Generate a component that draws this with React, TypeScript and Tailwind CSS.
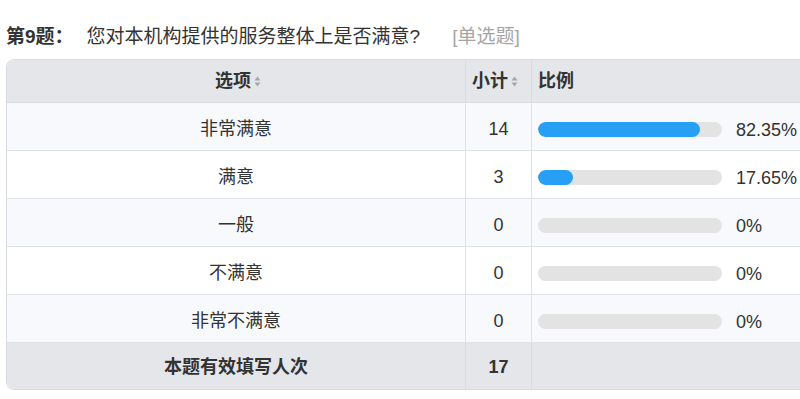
import React from "react";

const rows = [
  { label: "非常满意", count: "14", fill: 162, pct: "82.35%" },
  { label: "满意", count: "3", fill: 35, pct: "17.65%" },
  { label: "一般", count: "0", fill: 0, pct: "0%" },
  { label: "不满意", count: "0", fill: 0, pct: "0%" },
  { label: "非常不满意", count: "0", fill: 0, pct: "0%" },
];

function SortIcon() {
  return (
    <svg width="7" height="11" viewBox="0 0 7 11" className="ml-[3px]">
      <path d="M3.5 0.5 L6.5 4.5 L0.5 4.5 Z" fill="#a3a7ad" />
      <path d="M3.5 10.5 L6.5 6.5 L0.5 6.5 Z" fill="#a3a7ad" />
    </svg>
  );
}

export default function App() {
  const font = { fontFamily: '"Liberation Sans", "Noto Sans CJK SC", sans-serif' };
  return (
    <div className="w-[800px] h-[399px] overflow-hidden bg-white text-[#333]" style={font}>
      <div className="pl-[6px] pt-[24px] h-[59px] flex items-start text-[19px] leading-[26px]">
        <span className="font-bold text-[#333]">第9题：</span>
        <span className="ml-[13px] text-[#333]">您对本机构提供的服务整体上是否满意?</span>
        <span className="ml-[32px] text-[#a5a5a5]">[单选题]</span>
      </div>
      <div className="ml-[6px] w-[830px] border border-[#d8dbe0] rounded-[8px] overflow-hidden text-[18px]">
        <div className="grid grid-cols-[459px_66px_1fr] h-[43px] bg-[#e4e6ea] border-b border-[#d8dbe0] font-bold">
          <div className="flex items-center justify-center border-r border-[#d8dbe0] pl-[4px]">
            选项<SortIcon />
          </div>
          <div className="flex items-center justify-start border-r border-[#d8dbe0] pl-[6px]">
            小计<SortIcon />
          </div>
          <div className="flex items-center pl-[6px]">比例</div>
        </div>
        {rows.map((r, i) => (
          <div
            key={r.label}
            className={
              "grid grid-cols-[459px_66px_1fr] h-[48px] border-b border-[#dfe2e6] " +
              (i % 2 === 0 ? "bg-[#f7f9fc]" : "bg-white")
            }
          >
            <div className="flex items-center justify-center border-r border-[#dfe2e6] pt-[5px]">{r.label}</div>
            <div className="flex items-center justify-center border-r border-[#dfe2e6] pt-[5px]">{r.count}</div>
            <div className="flex items-center pl-[6px] pt-[5px]">
              <div className="w-[184px] h-[15px] rounded-full bg-[#e3e3e3] overflow-hidden flex">
                <div className="h-full rounded-full bg-[#279ff4]" style={{ width: r.fill }} />
              </div>
              <span className="ml-[14px] pt-[2px]">{r.pct}</span>
            </div>
          </div>
        ))}
        <div className="grid grid-cols-[459px_66px_1fr] h-[46px] bg-[#e4e6ea] font-bold">
          <div className="flex items-center justify-center border-r border-[#d8dbe0] pt-[3px]">本题有效填写人次</div>
          <div className="flex items-center justify-center border-r border-[#d8dbe0] pt-[3px]">17</div>
          <div />
        </div>
      </div>
    </div>
  );
}
